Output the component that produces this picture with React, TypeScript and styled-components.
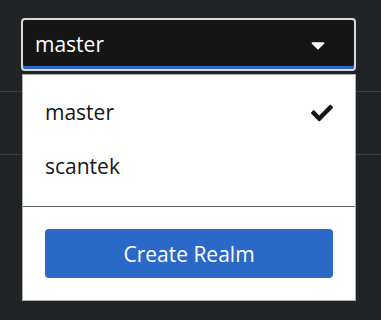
import * as React from "react";
import styled, { createGlobalStyle } from "styled-components";
import { FaCaretDown, FaCheck } from "react-icons/fa";

const COLORS = {
  page: "#212427",
  rule: "#3c3f42",
  toggle: "#151515",
  ring: "#d8d8d8",
  blue: "#2b69c9",
  text: "#151515",
  white: "#ffffff",
  divider: "#5f6266",
};

const realms = [
  { name: "master", current: true },
  { name: "scantek", current: false },
];

export default function App() {
  return (
    <>
      <GlobalStyle />
      <Page>
        <NavRow height='92px' />
        <NavRow height='63px' />

        <RealmSelect>
          <Toggle type='button' aria-expanded='true'>
            <ToggleText>master</ToggleText>
            <FaCaretDown size={22} />
          </Toggle>

          <Menu role='menu'>
            <MenuList>
              {realms.map((realm) => (
                <MenuItem key={realm.name} role='menuitem'>
                  <span>{realm.name}</span>
                  {realm.current && <FaCheck size={22} />}
                </MenuItem>
              ))}
            </MenuList>
            <Divider />
            <MenuFooter>
              <PrimaryButton type='button'>Create Realm</PrimaryButton>
            </MenuFooter>
          </Menu>
        </RealmSelect>
      </Page>
    </>
  );
}

const GlobalStyle = createGlobalStyle`
  *, *::before, *::after {
    box-sizing: border-box;
  }

  body {
    margin: 0;
    background: ${COLORS.page};
    font-family: "Open Sans", "Liberation Sans", sans-serif;
  }
`;

const Page = styled.div`
  position: relative;
  width: 381px;
  height: 320px;
  overflow: hidden;
  background: ${COLORS.page};
`;

const NavRow = styled.div<{ height: string }>`
  height: ${(props) => props.height};
  border-bottom: 1px solid ${COLORS.rule};
`;

const RealmSelect = styled.div`
  position: absolute;
  top: 18px;
  left: 21px;
  width: 335px;
`;

const Toggle = styled.button`
  width: 100%;
  height: 53px;
  display: flex;
  align-items: center;
  justify-content: space-between;
  padding: 0 25px 0 12px;
  background: ${COLORS.toggle};
  color: ${COLORS.white};
  border: 2px solid ${COLORS.ring};
  border-radius: 4px;
  box-shadow: inset 0 -3px 0 ${COLORS.blue};
  font: inherit;
  cursor: pointer;
`;

const ToggleText = styled.span`
  font-size: 21px;
  line-height: 1.5;
`;

const Menu = styled.div`
  margin: 4px 1px 0 2px;
  background: ${COLORS.white};
  box-shadow: 0 0 0 1px rgba(210, 210, 210, 0.8);
`;

const MenuList = styled.ul`
  list-style: none;
  margin: 0;
  padding: 11px 0 13px;
`;

const MenuItem = styled.li`
  display: flex;
  align-items: center;
  justify-content: space-between;
  padding: 11px 22px;
  font-size: 21px;
  line-height: 1.5;
  color: ${COLORS.text};
`;

const Divider = styled.hr`
  margin: 0;
  border: 0;
  height: 1px;
  background: ${COLORS.divider};
`;

const MenuFooter = styled.div`
  padding: 22px;
`;

const PrimaryButton = styled.button`
  width: 100%;
  height: 49px;
  border: 0;
  border-radius: 4px;
  background: ${COLORS.blue};
  color: ${COLORS.white};
  font: inherit;
  font-size: 21px;
  cursor: pointer;
`;
